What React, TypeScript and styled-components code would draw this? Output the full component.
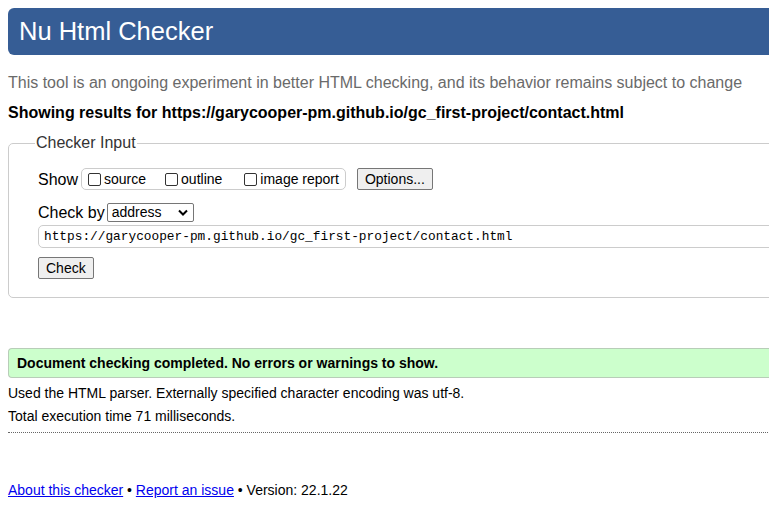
import React from 'react';
import styled, { createGlobalStyle } from 'styled-components';

const GlobalStyle = createGlobalStyle`
  html, body {
    margin: 0;
    padding: 0;
    background: #fff;
    overflow: hidden;
  }
  body {
    padding: 8px;
    font-family: "Liberation Sans", Arial, sans-serif;
    color: #000;
  }
`;

const Page = styled.div`
  width: 1040px;
`;

const Header = styled.h1`
  margin: 0;
  height: 47px;
  display: flex;
  align-items: center;
  padding: 0 11px;
  background: #365d95;
  color: #fff;
  font-size: 25.5px;
  font-weight: normal;
  border-radius: 6px 0 0 6px;
`;

const Intro = styled.p`
  margin: 18px 0 0;
  font-size: 16px;
  line-height: 19px;
  color: #6a6a6a;
`;

const Results = styled.p`
  margin: 11px 0 0;
  font-size: 16px;
  line-height: 19px;
  font-weight: bold;
`;

const Fieldset = styled.fieldset`
  margin: 12px 0 0;
  padding: 16px 29px 18px;
  border: 1px solid #ccc;
  border-radius: 5px;
  min-width: 0;
`;

const Legend = styled.legend`
  padding: 0 1px;
  margin-left: -3px;
  font-size: 16px;
  color: #333;
`;

const Row = styled.div<{ gap?: number }>`
  display: flex;
  align-items: center;
  font-size: 16px;
  line-height: 19px;
  margin-bottom: ${p => p.gap ?? 0}px;
`;

const CheckGroup = styled.div`
  display: flex;
  align-items: center;
  height: 20px;
  margin-left: 3px;
  padding: 0 6px 0 6px;
  border: 1px solid #ccc;
  border-radius: 5px;
  font-size: 14px;
`;

const Option = styled.label<{ space?: number }>`
  display: flex;
  align-items: center;
  margin-right: ${p => p.space ?? 0}px;
`;

const Box = styled.span`
  width: 11px;
  height: 11px;
  border: 1px solid #333;
  border-radius: 2px;
  margin-right: 3px;
  background: #fff;
`;

const Button = styled.button<{ offset?: number }>`
  height: 22px;
  padding: 0 7px;
  margin-left: ${p => p.offset ?? 0}px;
  font-family: "Liberation Sans", Arial, sans-serif;
  font-size: 14px;
  color: #000;
  background: #efefef;
  border: 1px solid #767676;
  border-radius: 2px;
`;

const Select = styled.div`
  display: flex;
  align-items: center;
  justify-content: space-between;
  width: 87px;
  height: 19px;
  margin-left: 2px;
  padding: 0 5px 0 4px;
  box-sizing: border-box;
  border: 1px solid #767676;
  border-radius: 2px;
  font-size: 14px;
`;

const UrlInput = styled.div`
  height: 23px;
  box-sizing: border-box;
  display: flex;
  align-items: center;
  padding: 0 5px;
  border: 1px solid #ccc;
  border-radius: 5px;
  font-family: "Liberation Mono", "DejaVu Sans Mono", monospace;
  font-size: 12.8px;
  margin-bottom: 9px;
`;

const Success = styled.div`
  margin-top: 50px;
  height: 30px;
  box-sizing: border-box;
  display: flex;
  align-items: center;
  padding: 0 8px;
  background: #ccffcc;
  border: 1px solid #b8cdb8;
  border-right: none;
  border-radius: 4px 0 0 4px;
  font-size: 14px;
  font-weight: bold;
`;

const Detail = styled.p<{ top: number }>`
  margin: ${p => p.top}px 0 0;
  font-size: 14px;
  line-height: 17px;
`;

const Rule = styled.hr`
  margin: 7px 0 0;
  border: none;
  border-top: 1px dotted #666;
  height: 0;
`;

const Footer = styled.p`
  margin: 49px 0 0;
  font-size: 14px;
  line-height: 17px;
  a {
    color: #0000ee;
    text-decoration: underline;
  }
`;

export default function App() {
  return (
    <>
      <GlobalStyle />
      <Page>
        <Header>Nu Html Checker</Header>
        <Intro>
          This tool is an ongoing experiment in better HTML checking, and its behavior remains subject to change
        </Intro>
        <Results>Showing results for https://garycooper-pm.github.io/gc_first-project/contact.html</Results>
        <Fieldset>
          <Legend>Checker Input</Legend>
          <Row gap={13}>
            Show
            <CheckGroup>
              <Option space={19}><Box />source</Option>
              <Option space={22}><Box />outline</Option>
              <Option><Box />image report</Option>
            </CheckGroup>
            <Button offset={11}>Options...</Button>
          </Row>
          <Row gap={3}>
            Check by
            <Select>
              address
              <svg width="10" height="7" viewBox="0 0 10 7">
                <path d="M1 1.5 L5 5.5 L9 1.5" fill="none" stroke="#000" strokeWidth="2" />
              </svg>
            </Select>
          </Row>
          <UrlInput>https://garycooper-pm.github.io/gc_first-project/contact.html</UrlInput>
          <Row>
            <Button>Check</Button>
          </Row>
        </Fieldset>
        <Success>Document checking completed. No errors or warnings to show.</Success>
        <Detail top={7}>Used the HTML parser. Externally specified character encoding was utf-8.</Detail>
        <Detail top={6}>Total execution time 71 milliseconds.</Detail>
        <Rule />
        <Footer>
          <a href="#">About this checker</a> • <a href="#">Report an issue</a> • Version: 22.1.22
        </Footer>
      </Page>
    </>
  );
}
